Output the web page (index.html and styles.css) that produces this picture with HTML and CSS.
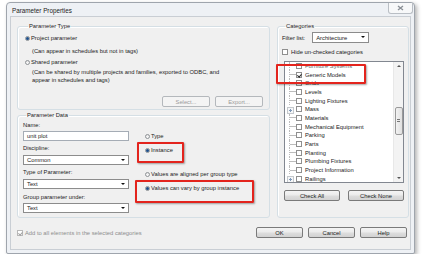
FILE: index.html
```html
<!DOCTYPE html>
<html lang="en">
<head>
    <meta charset="UTF-8">
    <title>Parameter Properties</title>
    <link rel="stylesheet" href="styles.css">
</head>
<body>
    <div class="window">
        <!-- Title bar -->
        <div class="titlebar">
            <span class="title">Parameter Properties</span>
            <span class="close">
                <svg width="7" height="6" viewBox="0 0 7 6"><path d="M1 1L6 5M6 1L1 5" stroke="#8a8f96" stroke-width="1.4"/></svg>
            </span>
        </div>

        <div class="client">
            <div class="main">
                <div class="left">
                    <!-- Parameter type -->
                    <fieldset class="group type-group">
                        <legend>Parameter Type</legend>
                        <div class="option"><span class="radio checked"></span>Project parameter</div>
                        <p class="note first-note">(Can appear in schedules but not in tags)</p>
                        <div class="option shared"><span class="radio"></span>Shared parameter</div>
                        <p class="note second-note">(Can be shared by multiple projects and families, exported to ODBC, and<br>appear in schedules and tags)</p>
                        <div class="btn-row">
                            <button class="btn" disabled>Select...</button>
                            <button class="btn" disabled>Export...</button>
                        </div>
                    </fieldset>

                    <!-- Parameter data -->
                    <fieldset class="group data-group">
                        <legend>Parameter Data</legend>
                        <div class="data-cols">
                            <div class="fields">
                                <div class="field-label">Name:</div>
                                <div class="textbox">unit plot</div>
                                <div class="field-label discipline">Discipline:</div>
                                <div class="combo">Common<span class="arrow"></span></div>
                                <div class="field-label">Type of Parameter:</div>
                                <div class="combo">Text<span class="arrow"></span></div>
                                <div class="field-label group-under">Group parameter under:</div>
                                <div class="combo group-combo">Text<span class="arrow"></span></div>
                            </div>
                            <div class="options">
                                <div class="option type-opt"><span class="radio"></span>Type</div>
                                <div class="option instance-opt marked"><span class="radio checked"></span>Instance</div>
                                <div class="option aligned-opt"><span class="radio"></span>Values are aligned per group type</div>
                                <div class="option vary-opt marked"><span class="radio checked"></span>Values can vary by group instance</div>
                            </div>
                        </div>
                    </fieldset>
                </div>

                <!-- Categories -->
                <fieldset class="group categories">
                    <legend>Categories</legend>
                    <div class="filter-row">
                        <span>Filter list:</span>
                        <div class="combo filter-combo">Architecture<span class="arrow"></span></div>
                    </div>
                    <div class="check-row hide-row"><span class="check"></span>Hide un-checked categories</div>
                    <div class="tree">
                        <div class="tree-rows">
                            <div class="tree-row"><span class="check"></span>Furniture Systems</div>
                            <div class="tree-row"><span class="check checked"></span>Generic Models</div>
                            <div class="tree-row"><span class="check"></span>Grids</div>
                            <div class="tree-row"><span class="check"></span>Levels</div>
                            <div class="tree-row"><span class="check"></span>Lighting Fixtures</div>
                            <div class="tree-row expandable"><span class="check"></span>Mass</div>
                            <div class="tree-row"><span class="check"></span>Materials</div>
                            <div class="tree-row"><span class="check"></span>Mechanical Equipment</div>
                            <div class="tree-row"><span class="check"></span>Parking</div>
                            <div class="tree-row"><span class="check"></span>Parts</div>
                            <div class="tree-row"><span class="check"></span>Planting</div>
                            <div class="tree-row"><span class="check"></span>Plumbing Fixtures</div>
                            <div class="tree-row"><span class="check"></span>Project Information</div>
                            <div class="tree-row expandable"><span class="check"></span>Railings</div>
                        </div>
                        <div class="scrollbar">
                            <span class="scroll-arrow up"></span>
                            <span class="thumb"><span class="grip"></span></span>
                            <span class="scroll-arrow down"></span>
                        </div>
                        <span class="tree-mark"></span>
                    </div>
                    <div class="check-buttons">
                        <button class="btn">Check All</button>
                        <button class="btn">Check None</button>
                    </div>
                </fieldset>
            </div>

            <div class="footer">
                <div class="check-row disabled"><span class="check checked"></span>Add to all elements in the selected categories</div>
                <div class="dialog-buttons">
                    <button class="btn">OK</button>
                    <button class="btn">Cancel</button>
                    <button class="btn">Help</button>
                </div>
            </div>
        </div>
    </div>
</body>
</html>
```

FILE: styles.css
```css
/* Base */
* {
    box-sizing: border-box;
}

body {
    margin: 0;
    background: #fff;
    font-family: "Liberation Sans", Arial, sans-serif;
    font-size: 5.8px;
    line-height: 8px;
    color: #222;
}

/* Dialog window frame */
.window {
    width: 409px;
    height: 252px;
    margin: 2px 0 0 6px;
    padding: 0 3px 3px 3px;
    border: 1px solid #9fa5ad;
    border-radius: 4px 4px 2px 2px;
    background: #eef1f5;
    box-shadow: 2px 2px 4px rgba(0, 0, 0, 0.3);
    display: flex;
    flex-direction: column;
}

.titlebar {
    height: 13px;
    display: flex;
    justify-content: space-between;
    padding-left: 2px;
}

.title {
    font-size: 6.3px;
    line-height: 15px;
}

.close {
    width: 25px;
    height: 11px;
    margin-right: -2px;
    border: 1px solid #b9bec4;
    border-top: none;
    border-radius: 0 0 3px 3px;
    background: #f7f8f9;
    display: flex;
    align-items: center;
    justify-content: center;
}

.client {
    flex: 1;
    background: #f0f0f0;
    border: 1px solid #c9ced4;
    padding: 5px 1px 0 6px;
    display: flex;
    flex-direction: column;
}

.main {
    display: flex;
    gap: 7px;
}

.left {
    width: 253px;
    display: flex;
    flex-direction: column;
    gap: 1px;
}

/* Group boxes */
.group {
    margin: 0;
    min-width: 0;
    border: 1px solid #d5dfe5;
    border-radius: 3px;
    box-shadow: inset 1px 1px 0 #fff;
}

.group legend {
    padding: 0 1px;
    margin-left: 3px;
    line-height: 8px;
}

/* Radio and checkbox controls */
.option,
.check-row {
    display: flex;
    align-items: center;
    height: 8px;
    white-space: nowrap;
}

.radio {
    width: 5px;
    height: 5px;
    margin-right: 1px;
    border: 1px solid #8e9296;
    border-radius: 50%;
    background: linear-gradient(#e6e6e6, #fdfdfd);
    flex-shrink: 0;
    display: flex;
    align-items: center;
    justify-content: center;
}

.radio.checked::after {
    content: '';
    width: 3px;
    height: 3px;
    border-radius: 50%;
    background: #1d4f8a;
}

.check {
    width: 6px;
    height: 6px;
    margin-right: 3px;
    border: 1px solid #8f8f8f;
    background: #fff;
    flex-shrink: 0;
    position: relative;
}

.check.checked::after {
    content: '';
    position: absolute;
    left: 1px;
    top: 0;
    width: 1.5px;
    height: 3px;
    border: solid #222;
    border-width: 0 1px 1px 0;
    transform: rotate(40deg);
}

/* Parameter Type */
.type-group {
    padding: 4px 6px 2px 7px;
}

.note {
    margin: 0;
    padding-left: 7px;
}

.first-note {
    margin-top: 5px;
}

.shared {
    margin-top: 3px;
}

.second-note {
    margin-top: 2px;
}

.btn-row {
    margin-top: 12px;
    display: flex;
    justify-content: flex-end;
    gap: 5px;
}

/* Buttons */
.btn {
    height: 11px;
    width: 48px;
    padding: 0;
    font-family: inherit;
    font-size: 5.8px;
    color: #222;
    border: 1px solid #7a7a7a;
    border-radius: 2px;
    background: linear-gradient(#f4f4f4 0%, #ebebeb 48%, #dedede 52%, #d2d2d2 100%);
}

.btn:disabled {
    color: #9a9a9a;
    border-color: #b4b8bc;
    background: #f4f4f4;
}

/* Parameter Data */
.data-group {
    padding: 2px 6px 4px 5px;
}

.data-cols {
    display: flex;
    gap: 16px;
}

.fields {
    width: 106px;
    display: flex;
    flex-direction: column;
}

.textbox,
.combo {
    height: 10px;
    margin-top: 2px;
    padding-left: 3px;
    border: 1px solid #a5acb5;
    background: #fff;
    display: flex;
    align-items: center;
    position: relative;
}

.combo {
    margin-top: 3px;
    border-color: #8c8c8c;
}

.arrow {
    position: absolute;
    right: 3px;
    top: 3px;
    border-left: 2px solid transparent;
    border-right: 2px solid transparent;
    border-top: 2px solid #111;
}

.discipline {
    margin-top: 5px;
}

.field-label {
    margin-top: 3px;
}

.fields .field-label:first-child {
    margin-top: 0;
}

.group-under {
    margin-top: 4px;
}

.group-combo {
    margin-top: 2px;
}

.options {
    display: flex;
    flex-direction: column;
}

.type-opt {
    margin-top: 11px;
}

.instance-opt {
    margin-top: 6px;
}

.aligned-opt {
    margin-top: 16px;
}

.vary-opt {
    margin-top: 6px;
}

/* Red annotation boxes */
.marked {
    position: relative;
}

.marked::before,
.tree-mark {
    content: '';
    position: absolute;
    border: 2px solid #e3241d;
    border-radius: 1px;
    box-shadow: 1px 1px 2px rgba(0, 0, 0, 0.35);
}

.instance-opt::before {
    left: -8px;
    top: -4px;
    width: 43px;
    height: 17px;
}

.vary-opt::before {
    left: -10px;
    top: -4px;
    width: 115px;
    height: 19px;
}

.tree-mark {
    left: -9px;
    top: 2px;
    width: 90px;
    height: 20px;
}

/* Categories */
.categories {
    flex: 1;
    padding: 2px 4px 0 4px;
}

.filter-row {
    display: flex;
    align-items: center;
    gap: 7px;
}

.filter-combo {
    width: 57px;
    height: 11px;
    margin-top: 0;
}

.hide-row {
    margin-top: 5px;
}

.tree {
    margin: 5px 0 0 2px;
    height: 122px;
    border: 1px solid #828790;
    background: #fff;
    display: flex;
    position: relative;
}

.tree-rows {
    flex: 1;
    overflow: hidden;
}

.tree-row {
    height: 8.7px;
    padding-left: 11px;
    display: flex;
    align-items: center;
    position: relative;
    white-space: nowrap;
}

.tree-row:first-child {
    margin-top: -0.5px;
    color: #666;
}

.tree-row::after {
    content: '';
    position: absolute;
    left: 4px;
    top: 0;
    bottom: 0;
    width: 6px;
    border-left: 1px dotted #a0a0a0;
    background: linear-gradient(#a0a0a0, #a0a0a0) no-repeat 0 50% / 100% 1px;
    opacity: 0.7;
}

.expandable::after {
    width: 5px;
    height: 5px;
    left: 2px;
    top: 2px;
    bottom: auto;
    border: 1px solid #c4c8cc;
    background:
        linear-gradient(#7d98b8, #7d98b8) no-repeat 50% 50% / 3px 1px,
        linear-gradient(#7d98b8, #7d98b8) no-repeat 50% 50% / 1px 3px,
        #f6f7f8;
    opacity: 1;
}

.scrollbar {
    width: 10px;
    background: #f3f3f3;
    border-left: 1px solid #e8e8e8;
    display: flex;
    flex-direction: column;
    align-items: center;
}

.scroll-arrow {
    margin: 3px 0;
    border-left: 2px solid transparent;
    border-right: 2px solid transparent;
}

.scroll-arrow.up {
    border-bottom: 2px solid #555;
}

.scroll-arrow.down {
    margin-top: auto;
    border-top: 2px solid #555;
}

.thumb {
    margin-top: 37px;
    width: 8px;
    height: 28px;
    border: 1px solid #9a9a9a;
    border-radius: 2px;
    background: linear-gradient(90deg, #f2f2f2, #e0e0e0);
    display: flex;
    align-items: center;
    justify-content: center;
}

.grip {
    width: 3px;
    height: 4px;
    background: repeating-linear-gradient(#777 0 1px, transparent 1px 2px);
}

.check-buttons {
    margin: 7px 0 0 2px;
    display: flex;
    justify-content: space-between;
}

.check-buttons .btn {
    width: 56px;
}

/* Footer */
.footer {
    margin-top: 9px;
    padding-right: 2px;
    display: flex;
    justify-content: space-between;
    align-items: center;
}

.check-row.disabled {
    color: #8d8d8d;
}

.disabled .check {
    border-color: #b8b8b8;
    margin-right: 2px;
}

.disabled .check.checked::after {
    border-color: #a0a0a0;
}

.dialog-buttons {
    display: flex;
    gap: 5px;
}

.dialog-buttons .btn {
    width: 47px;
}
```
